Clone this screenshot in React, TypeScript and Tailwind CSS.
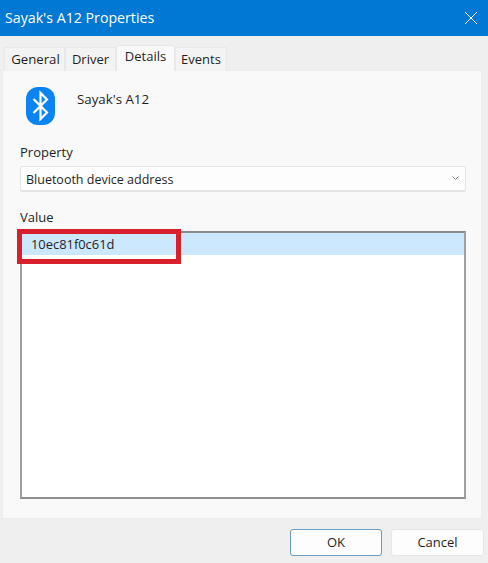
import React from 'react';

const FONT = "font-['Open_Sans','Noto_Sans',sans-serif]";

const TabItem = ({ label, width, active, textSize = 'text-[13px]' }: { label: string; width: string; active?: boolean; textSize?: string }) => (
  <div
    className={`${width} ${textSize} flex items-center justify-center border border-b-0 border-[#e8e8e8] text-[#1f1f1f] ${
      active ? 'h-[26px] bg-[#f9f9f9] pb-[3px] rounded-t-[3px]' : 'h-[24px] bg-[#f3f3f3]'
    }`}
  >
    {label}
  </div>
);

const BluetoothIcon = () => (
  <svg width="29" height="38" viewBox="0 0 29 38" className="block">
    <rect x="0" y="0" width="29" height="38" rx="12" fill="#0a84f0" />
    <path d="M7.5 12 L21 25.5 L14.5 32 L14.5 6 L21 12.5 L7.5 26" fill="none" stroke="#ffffff" strokeWidth="2.2" />
  </svg>
);

export default function App() {
  return (
    <div className={`${FONT} relative w-[488px] h-[563px] bg-[#efefef] overflow-hidden flex flex-col`}>
      {/* Title bar */}
      <div className="h-[36px] bg-[#0078d4] flex items-center justify-between pl-[5px] pr-[10px] text-white">
        <span className="text-[14.2px]">Sayak's A12 Properties</span>
        <svg width="14" height="14" viewBox="0 0 14 14">
          <path d="M1 1 L13 13 M13 1 L1 13" stroke="#ffffff" strokeWidth="1" />
        </svg>
      </div>

      {/* Tabs */}
      <div className="h-[35px] flex items-end pl-[4px]">
        <TabItem label="General" width="w-[61px]" textSize="text-[13.2px] pl-[2px]" />
        <TabItem label="Driver" width="w-[51px]" />
        <TabItem label="Details" width="w-[59px]" active />
        <TabItem label="Events" width="w-[52px]" />
      </div>

      {/* Panel */}
      <div className="ml-[2px] w-[480px] h-[448px] bg-[#f9f9f9] border border-[#ececec] border-t-0 pl-[17px] pr-[15px] flex flex-col">
        <div className="flex items-start h-[80px] pt-[16px] pl-[6px]">
          <BluetoothIcon />
          <span className="ml-[22px] mt-[3px] text-[13.3px] text-[#1f1f1f]">Sayak's A12</span>
        </div>

        <div className="text-[13px] leading-[18px] text-[#1f1f1f] h-[15px] -mt-[8px] mb-[8px]">Property</div>
        <div className="h-[26px] bg-[#fdfdfd] border border-[#e3e3e3] border-b-2 rounded-[2px] flex items-center justify-between pl-[5px] pr-[6px]">
          <span className="text-[12.5px] text-[#1f1f1f] pt-[3px]">Bluetooth device address</span>
          <svg width="7" height="5" viewBox="0 0 7 5">
            <path d="M0.5 0.5 L3.5 3.5 L6.5 0.5" fill="none" stroke="#808080" strokeWidth="1" />
          </svg>
        </div>

        <div className="text-[13px] leading-[18px] text-[#1f1f1f] mt-[16px] h-[23px]">Value</div>
        <div className="h-[268px] bg-white border-2 border-[#a0a0a0] border-t-[#8a8a8a] border-b-[#8f8f8f]">
          <div className="h-[22px] bg-[#cce8ff] flex items-center pl-[9px] pt-[1px] text-[12.9px] text-[#1f1f1f]">10ec81f0c61d</div>
        </div>
      </div>

      {/* Buttons */}
      <div className="flex justify-end gap-[9px] pr-[4px] mt-[10px]">
        <button className="w-[92px] h-[27px] bg-[#fdfdfd] border border-[#6a9cc4] rounded-[3px] text-[13px] text-[#1f1f1f]">OK</button>
        <button className="w-[93px] h-[27px] bg-[#fdfdfd] border border-[#e6e6e6] rounded-[3px] text-[13px] text-[#1f1f1f]">Cancel</button>
      </div>

      {/* Red annotation */}
      <div className="absolute left-[17px] top-[229px] w-[164px] h-[35px] border-[5px] border-[#d81f2c]" />
    </div>
  );
}
